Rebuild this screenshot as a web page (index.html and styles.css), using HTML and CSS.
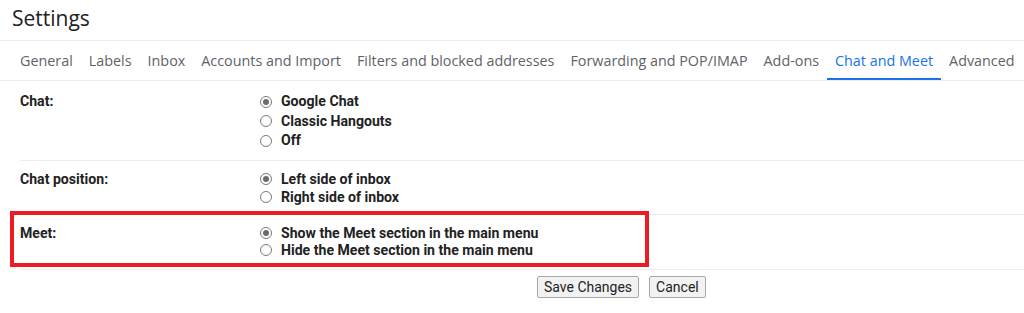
FILE: index.html
```html
<!DOCTYPE html>
<html>
<head>
<meta charset="utf-8">
<link rel="stylesheet" href="styles.css">
</head>
<body>
<div class="page">
  <header class="title-bar"><h1 class="title">Settings</h1></header>
  <nav class="tabs">
    <span class="tab">General</span>
    <span class="tab">Labels</span>
    <span class="tab">Inbox</span>
    <span class="tab">Accounts and Import</span>
    <span class="tab">Filters and blocked addresses</span>
    <span class="tab">Forwarding and POP/IMAP</span>
    <span class="tab">Add-ons</span>
    <span class="tab active">Chat and Meet</span>
    <span class="tab">Advanced</span>
  </nav>
  <section class="settings">
    <div class="row row-chat">
      <div class="label">Chat:</div>
      <div class="options">
        <div class="opt"><span class="radio checked"></span>Google Chat</div>
        <div class="opt"><span class="radio"></span>Classic Hangouts</div>
        <div class="opt"><span class="radio"></span>Off</div>
      </div>
    </div>
    <div class="row row-pos">
      <div class="label">Chat position:</div>
      <div class="options">
        <div class="opt"><span class="radio checked"></span>Left side of inbox</div>
        <div class="opt"><span class="radio"></span>Right side of inbox</div>
      </div>
    </div>
    <div class="row row-meet">
      <div class="label">Meet:</div>
      <div class="options">
        <div class="opt"><span class="radio checked"></span>Show the Meet section in the main menu</div>
        <div class="opt"><span class="radio"></span>Hide the Meet section in the main menu</div>
      </div>
      <div class="highlight"></div>
    </div>
    <div class="actions">
      <button class="btn">Save Changes</button>
      <button class="btn">Cancel</button>
    </div>
  </section>
</div>
</body>
</html>
```

FILE: styles.css
```css
* { box-sizing: border-box; }
html, body { margin: 0; padding: 0; background: #fff; }
body { width: 1024px; height: 313px; overflow: hidden; font-family: Roboto, "Liberation Sans", sans-serif; color: #222; }

.title-bar {
  height: 41px;
  border-bottom: 1px solid #ececec;
  padding-left: 12px;
}
.title {
  margin: 0;
  font-family: "Open Sans", Roboto, sans-serif;
  font-weight: 400;
  font-size: 21px;
  line-height: 37px;
  color: #202124;
}

.tabs {
  display: flex;
  height: 40px;
  padding-left: 12px;
  border-bottom: 1px solid #ececec;
}
.tab {
  padding: 1px 8px 0;
  font-family: "Open Sans", Roboto, sans-serif;
  font-size: 14.35px;
  line-height: 38px;
  color: #5f6368;
  white-space: nowrap;
  border-bottom: 2px solid transparent;
}
.tab.active {
  color: #1a73e8;
  border-bottom-color: #1a73e8;
}

.settings { padding-left: 20px; }
.row {
  position: relative;
  display: flex;
  border-bottom: 1px solid #ececec;
  font-size: 14.1px;
  font-weight: 700;
}
.row-chat { padding: 11px 0 9.5px; line-height: 19.5px; }
.row-pos { padding: 9px 0 8px; line-height: 18px; }
.row-meet { padding: 9.5px 0 10.5px; line-height: 17px; }
.label { width: 240px; }
.options { display: flex; flex-direction: column; }
.opt { display: flex; align-items: center; }
.radio {
  width: 12px;
  height: 12px;
  border: 1px solid #7a7a7a;
  border-radius: 50%;
  margin-right: 9px;
  display: flex;
  align-items: center;
  justify-content: center;
  background: #fff;
}
.radio.checked::after {
  content: "";
  width: 6px;
  height: 6px;
  border-radius: 50%;
  background: #6b6b6b;
}

.highlight {
  position: absolute;
  left: -10px;
  top: -4px;
  width: 639px;
  height: 56px;
  border: 4px solid #ec1c24;
  pointer-events: none;
}

.actions {
  display: flex;
  gap: 10px;
  padding: 6px 0 0 517px;
}
.btn {
  font-family: Roboto, "Liberation Sans", sans-serif;
  font-size: 14px;
  color: #222;
  background: #f2f2f2;
  border: 1px solid #a9a9a9;
  border-radius: 2px;
  height: 22px;
  padding: 0 6px;
  line-height: 20px;
}
```
